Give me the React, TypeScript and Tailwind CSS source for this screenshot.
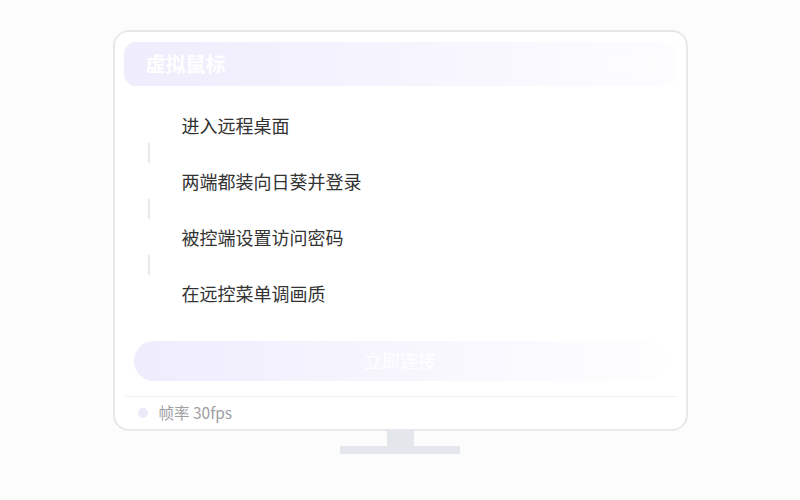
import React from 'react';

const steps = ['进入远程桌面', '两端都装向日葵并登录', '被控端设置访问密码', '在远控菜单调画质'];

export default function App() {
  return (
    <div
      className="w-[800px] h-[500px] bg-[#fcfcfd] flex flex-col items-center pt-[30px]"
      style={{ fontFamily: '"Noto Sans CJK SC", "Noto Sans", sans-serif' }}
    >
      {/* Monitor */}
      <div className="w-[575px] h-[401px] bg-white border-2 border-[#e6e8ec] rounded-[16px] flex flex-col px-[9px] pt-[10px]">
        {/* Header */}
        <div className="h-[44px] rounded-[12px] bg-linear-to-r from-[#efecfd] to-[#fdfdff] flex items-center justify-between pl-[22px] pr-[20px]">
          <span className="text-white text-[20px] font-bold leading-none">虚拟鼠标</span>
          <span className="text-white text-[12px] leading-none">远程控制</span>
        </div>

        {/* Steps */}
        <div className="flex flex-col pl-[24px] pt-[25px]">
          {steps.map((s, i) => (
            <div key={s} className="flex flex-col">
              <div className="h-[28px] flex items-center pl-[34px] text-[18px] text-[#333] leading-none">{s}</div>
              {i < steps.length - 1 && (
                <div className="h-[28px] flex items-center">
                  <div className="w-[2px] h-[20px] bg-[#e6e8ec]" />
                </div>
              )}
            </div>
          ))}
        </div>

        {/* Connect button */}
        <div className="mt-[34px] mx-[10px] h-[40px] rounded-full bg-linear-to-r from-[#efecfd] via-[#f7f6fe] to-[#fefeff] flex items-center justify-center pb-[2px]">
          <span className="text-white text-[18px] leading-none">立即连接</span>
        </div>

        {/* Footer */}
        <div className="mt-[15px] mx-[1px] border-t border-[#eef0f3] flex items-center h-[33px] pl-[13px] gap-[11px]">
          <div className="w-[10px] h-[10px] rounded-full bg-[#ece9fb]" />
          <span className="text-[15.5px] text-[#9e9ea3] leading-none">帧率 30fps</span>
        </div>
      </div>

      {/* Stand */}
      <div className="w-[27px] h-[15px] bg-[#e3e6ea]" />
      <div className="w-[120px] h-[8px] bg-[#e3e6ea]" />
    </div>
  );
}
